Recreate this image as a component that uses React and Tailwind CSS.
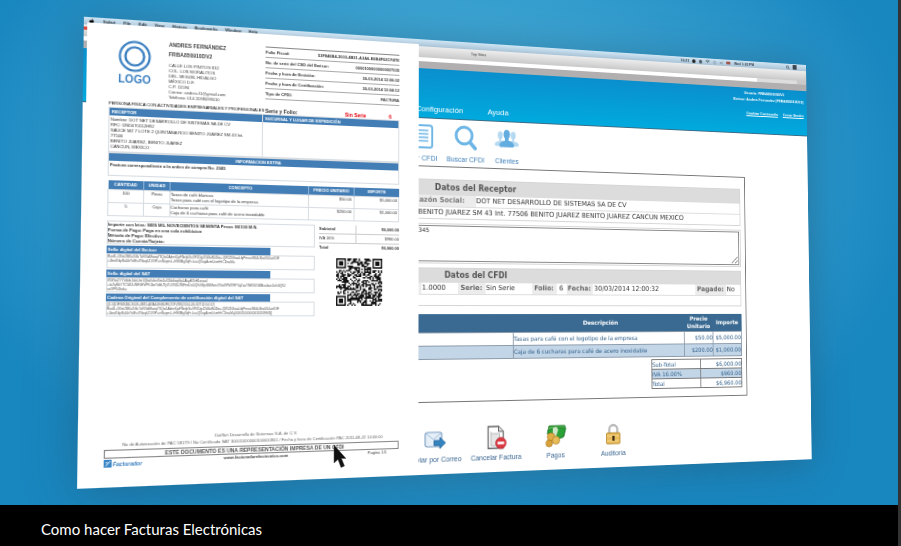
import { FaApple, FaWifi, FaVolumeUp, FaSearch } from "react-icons/fa";

const menus = ["Safari", "File", "Edit", "View", "History", "Bookmarks", "Window", "Help"];

const address = [
  "CALLE LOS PINITOS 832",
  "COL. LOS MORALITOS",
  "DEL. MIGUEL HIDALGO",
  "MÉXICO D.F.",
  "C.P. 11590",
  "Correo: andres.f1@gmail.com",
  "Teléfono: 014 2098098010",
];

const folioRows = [
  ["Folio Fiscal:", "53F846B4-3003-4B31-A3A6-E6B4F02CF47E"],
  ["No. de serie del CSD del Emisor:", "00001000000000037535"],
  ["Fecha y hora de Emisión:", "30-03-2014 12:06:02"],
  ["Fecha y hora de Certificación:", "30-03-2014 12:04:12"],
  ["Tipo de CFDI:", "FACTURA"],
];

const receptor = [
  "Nombre: DOT NET DESARROLLO DE SISTEMAS SA DE CV",
  "RFC: DND070112H92",
  "SAUCE MZ 7 LOTE 2 QUINTANA ROO BENITO JUAREZ SM 43 Int.",
  "77506",
  "BENITO JUAREZ, BENITO JUAREZ",
  "CANCUN, MEXICO",
];

const conceptos = [
  { cantidad: "100", unidad: "Pieza", lines: ["Tasas de café blancas", "Tasas para café con el logotipo de la empresa"], precio: "$50.00", importe: "$5,000.00" },
  { cantidad: "5", unidad: "Caja", lines: ["Cucharas para café", "Caja de 6 cucharas para café de acero inoxidable"], precio: "$200.00", importe: "$1,000.00" },
];

const sellos = [
  {
    title: "Sello digital del Emisor",
    lines: [
      "RocB+3Xm2BKa7i8uTzKNdMozqY3Qw1AdmXjaFNefpSuVF2Dg45WatN4Dw+QW2Z0haaLfqPmcwSB4c3bz0S4ueK3F",
      "+0brd7dpNu5bYvIEu7NoqkZ1VIP+inNopmL+H98Mg8qFcLuaQXoyAzmUsmHrCDnaM=",
    ],
  },
  {
    title: "Sello digital del SAT",
    lines: [
      "W0Nw2YYVdde1duUm1Qbz6vbeXm4aXDkdiwp9pLAkyA7kH1ooaxl",
      "+toZqNkYTCWDLlNF0EVPKJbxYdbUTyTUOSD2MFtmDa5QKrMjw6BMwnOVwKPM7RFYqZoaYNR3U5BMoabae2ohGQ92",
      "oaYPK4bok=",
    ],
  },
  {
    title: "Cadena Original del Complemento de certificación digital del SAT",
    lines: [
      "||1.0|53F846B4-3003-4B31-A3A6-E6B4F02CF47E|2014-03-30T12:04:12|",
      "RocB+3Xm2BKa7i8uTzKNdMozqY3Qw1AdmXjaFNefpSuVF2Dg45WatN4Dw+QW2Z0haaLfqPmcwSB4c3bz0S4ueK3F",
      "+0brd7dpNu5bYvIEu7NoqkZ1VIP+inNopmL+H98Mg8qFcLuaQXoyAzmUsmHrCDnaM=|00001000000030209963||",
    ],
  },
];

const QR_SIZE = 33;

function finderModule(x, y) {
  const fx = x < 8 ? x : x > QR_SIZE - 9 ? QR_SIZE - 1 - x : -1;
  const fy = y < 8 ? y : y > QR_SIZE - 9 ? QR_SIZE - 1 - y : -1;
  if (fx < 0 || fy < 0 || (x > 8 && y > 8)) return null;
  if (fx === 7 || fy === 7) return false;
  const d = Math.max(Math.abs(fx - 3), Math.abs(fy - 3));
  return d !== 2;
}

function qrPath() {
  let seed = 77;
  let d = "";
  for (let y = 0; y < QR_SIZE; y++) {
    for (let x = 0; x < QR_SIZE; x++) {
      seed = (seed * 1103515245 + 12345) % 2147483648;
      const on = finderModule(x, y) ?? seed / 2147483648 > 0.45;
      if (on) d += `M${x} ${y}h1v1h-1z`;
    }
  }
  return d;
}

function QrCode() {
  return (
    <svg viewBox={`0 0 ${QR_SIZE} ${QR_SIZE}`} className="size-[46px]" aria-hidden="true">
      <path d={qrPath()} fill="#111" />
    </svg>
  );
}

function MenuBar() {
  return (
    <div className="flex h-[7px] items-center justify-between bg-linear-to-b from-[#cfe6f5] to-[#a9c3d6] px-1 text-[4px] leading-[5px] font-bold text-[#333d45]">
      <div className="flex items-center gap-[7px]">
        <FaApple className="size-[6px] text-black" />
        {menus.map((m) => (
          <span key={m}>{m}</span>
        ))}
      </div>
      <div className="flex items-center gap-1">
        <span>16:21</span>
        <span className="size-1 rounded-full bg-[#222]" />
        <span className="size-1 rounded-xs bg-[#4b5a66]" />
        <FaWifi className="size-[5px]" />
        <span className="size-1 rounded-full border border-[#8fa5b5]" />
        <FaVolumeUp className="size-1 text-[#8496a3]" />
        <span className="h-[3px] w-[5px] bg-[#a3564a]" />
        <span className="mr-9">Wed 1:22 PM</span>
        <FaSearch className="size-1" />
        <span className="mr-2 h-[5px] w-[5px] bg-[#3b464f]" />
      </div>
    </div>
  );
}

function BrowserBar() {
  return (
    <>
      <div className="flex h-[11px] items-start justify-between bg-linear-to-b from-[#ededed] to-[#c9c9c9] pt-[2px] text-[4px] leading-[5px] text-[#444]">
        <span className="size-[3px] bg-[#e0483e]" />
        <span>Top Sites</span>
        <span />
      </div>
      <div className="flex h-1 items-stretch bg-[#c9c9c9]">
        <div className="grow bg-white" />
        <div className="mr-3 w-[50px] bg-[#ddd]" />
      </div>
      <div className="h-[7px] bg-[#b1afaf]" />
    </>
  );
}

function SiteHeader() {
  return (
    <header className="flex h-[50px] items-stretch justify-between border-b border-[#3c6c85] bg-linear-to-b from-[#0a8fcd] to-[#00aade] text-white">
      <nav className="flex items-end gap-[26px] pb-[2px] pl-[318px] text-[8px] leading-[12px]">
        <a href="#configuracion">Configuración</a>
        <a href="#ayuda">Ayuda</a>
      </nav>
      <div className="flex flex-col pt-[2px] pr-1 text-right text-[4px] leading-[7px] font-bold">
        <span className="pr-6">Usuario: FRBA850910DV2</span>
        <span>Emisor: Andres Fernandez (FRBA850910DV2)</span>
        <span className="mt-2 flex justify-end gap-[6px]">
          <a href="#contrasena" className="underline">Cambiar Contraseña</a>
          <a href="#cerrar" className="underline">Cerrar Sesión</a>
        </span>
      </div>
    </header>
  );
}

function DocIcon() {
  return (
    <svg viewBox="0 0 24 26" className="h-[26px] w-6" fill="none" stroke="#6db6e6" aria-hidden="true">
      <rect x="3" y="2" width="18" height="22" rx="2.500" strokeWidth="2" />
      <path d="M7 7h10M7 10.500h10M7 14h10M7 17.500h10" strokeWidth="1.600" />
    </svg>
  );
}

function SearchIcon() {
  return (
    <svg viewBox="0 0 24 26" className="h-[26px] w-6" fill="none" stroke="#6db6e6" aria-hidden="true">
      <circle cx="10.500" cy="10.500" r="8.500" strokeWidth="3" />
      <path d="M17 17.500l5 5.500" strokeWidth="4" strokeLinecap="round" />
    </svg>
  );
}

function PeopleIcon() {
  return (
    <svg viewBox="0 0 26 26" className="size-[26px]" aria-hidden="true">
      <g fill="#b5d9f1">
        <ellipse cx="6" cy="8.500" rx="2.700" ry="4" />
        <ellipse cx="20" cy="8.500" rx="2.700" ry="4" />
        <path d="M5 12h2v2h12v-2h2v2.500q5 .5 5 3.500l-1 1.500H1L0 18q0-3 5-3.500z" />
      </g>
      <g fill="#62acdf">
        <ellipse cx="13" cy="7.500" rx="3.500" ry="4.800" />
        <path d="M11 11h4v3q6 1 6 5l-1 1.500H6L5 19q0-4 6-5z" />
      </g>
    </svg>
  );
}

function MailIcon() {
  return (
    <svg viewBox="0 0 24 24" className="size-6" aria-hidden="true">
      <rect x="2" y="5" width="17" height="14" rx="2" fill="#e6eff8" stroke="#7d9fc4" strokeWidth="1.200" />
      <path d="M3 6l7.500 6L18 6" fill="none" stroke="#a3bddb" />
      <path d="M11 13h6v-3l6 5.500-6 5.500v-3h-6z" fill="#3484c0" stroke="#1f5f99" strokeWidth=".7" />
    </svg>
  );
}

function CancelIcon() {
  return (
    <svg viewBox="0 0 24 24" className="size-6" aria-hidden="true">
      <path d="M3.500 1h11l5 5v16.500h-16z" fill="#fff" stroke="#666" strokeWidth="1.300" />
      <path d="M14.500 1v5h5" fill="#ddd" stroke="#666" />
      <path d="M6.500 6v14h9V8h-9" fill="#e5e5e5" stroke="#bbb" />
      <circle cx="17" cy="17.500" r="5.500" fill="#dc3a42" stroke="#b01f2a" strokeWidth=".7" />
      <rect x="13.500" y="16.200" width="7" height="2.600" fill="#fff" />
    </svg>
  );
}

function MoneyIcon() {
  return (
    <svg viewBox="0 0 24 24" className="size-6" aria-hidden="true">
      <path d="M5 2h17l1 3-2 8-6 2-12-5z" fill="#4fae4b" stroke="#1d7b28" />
      <path d="M3 7l9-3 11 1-3 9-8 1z" fill="#2aa237" stroke="#17752a" strokeWidth=".7" />
      <path d="M9 4l4-1 2 3-3 8-3-2z" fill="#cfe6c8" />
      <circle cx="7" cy="13" r="4" fill="#e0ae46" stroke="#a8761c" strokeWidth=".7" />
      <circle cx="12.500" cy="16.500" r="4" fill="#e8bd59" stroke="#a8761c" strokeWidth=".7" />
      <circle cx="5" cy="19.500" r="3.500" fill="#d8a23a" stroke="#a8761c" strokeWidth=".7" />
    </svg>
  );
}

function LockIcon() {
  return (
    <svg viewBox="0 0 24 24" className="size-6" aria-hidden="true">
      <path d="M7.500 12V7.500a4.500 4.500 0 0 1 9 0V12" fill="none" stroke="#b9b9b9" strokeWidth="2.400" />
      <rect x="4.500" y="11" width="15" height="11" rx="1" fill="#e9bd5c" stroke="#b98a2b" />
      <path d="M5 14h14M5 19h14" stroke="#f5d78e" />
      <path d="M11 14h2.500v5H11z" fill="#3b2b12" />
    </svg>
  );
}

const toolbar = [
  { label: "Ver CFDI", icon: DocIcon },
  { label: "Buscar CFDI", icon: SearchIcon },
  { label: "Clientes", icon: PeopleIcon },
];

const actions = [
  { label: "Enviar por Correo", icon: MailIcon },
  { label: "Cancelar Factura", icon: CancelIcon },
  { label: "Pagos", icon: MoneyIcon },
  { label: "Auditoría", icon: LockIcon },
];

function InvoiceDetail() {
  const label = "bg-[#ececec] p-0 text-center font-bold text-[#666]";
  return (
    <section className="mr-[78px] ml-[75px] border border-[#777] px-[5px] pt-3 pb-2 font-['DejaVu_Sans',sans-serif] text-[7px] leading-[11px] text-[#333]">
      <table className="w-full table-fixed border-collapse border border-[#d5d5d5]">
        <thead>
          <tr>
            <th colSpan={2} className="bg-[#dcdcdc] p-0 text-[8px] leading-[15px] text-[#555]">Datos del Receptor</th>
          </tr>
        </thead>
        <tbody>
          <tr className="border-b border-[#ddd]">
            <td className="bg-[#ececec] p-0 pr-3 text-right font-bold text-[#777]">Razón Social:</td>
            <td className="p-0">DOT NET DESARROLLO DE SISTEMAS SA DE CV</td>
          </tr>
          <tr>
            <td colSpan={2} className="p-0 pr-[67px] text-right">
              BENITO JUAREZ SM 43 Int. 77506 BENITO JUAREZ BENITO JUAREZ CANCUN MEXICO
            </td>
          </tr>
        </tbody>
      </table>

      <div className="mt-1 border border-[#d5d5d5] p-px">
        <textarea
          aria-label="Comentarios"
          defaultValue="No. 2345"
          className="block h-[36px] w-full resize rounded-none border border-[#888] p-0 pl-[221px] text-[6px] leading-[8px]"
        />
      </div>

      <table className="mt-1 w-full table-fixed border-collapse border border-[#d5d5d5]">
        <colgroup>
          <col className="w-[242px]" />
          <col className="w-[38px]" />
          <col className="w-[29px]" />
          <col className="w-[50px]" />
          <col className="w-[27px]" />
          <col className="w-[11px]" />
          <col className="w-[29px]" />
          <col className="w-[118px]" />
          <col className="w-[37px]" />
          <col />
        </colgroup>
        <thead>
          <tr>
            <th colSpan={10} className="bg-[#dcdcdc] p-0 text-[8px] leading-[14px] text-[#555]">Datos del CFDI</th>
          </tr>
        </thead>
        <tbody className="text-[7px]">
          <tr className="border-b border-[#ddd] whitespace-nowrap">
            <td className="bg-[#ececec] p-0" />
            <td className="p-0 pl-px">1.0000</td>
            <td className={label}>Serie:</td>
            <td className="p-0 pl-px">Sin Serie</td>
            <td className={label}>Folio:</td>
            <td className="p-0 text-center">6</td>
            <td className={label}>Fecha:</td>
            <td className="p-0 pl-[2px]">30/03/2014 12:00:32</td>
            <td className={label}>Pagado:</td>
            <td className="p-0 pl-px">No</td>
          </tr>
          <tr>
            <td colSpan={10} className="h-[11px] p-0" />
          </tr>
        </tbody>
      </table>

      <table className="mt-2 w-full table-fixed border-collapse text-[6px] leading-3 text-[#2f5f8a]">
        <colgroup>
          <col className="w-[339px]" />
          <col />
          <col className="w-[34px]" />
          <col className="w-[34px]" />
        </colgroup>
        <thead>
          <tr className="bg-[#3a6a92] text-white">
            <th className="h-[18px] p-0" />
            <th className="p-0">Descripción</th>
            <th className="p-0 leading-[8px]">Precio Unitario</th>
            <th className="p-0">Importe</th>
          </tr>
        </thead>
        <tbody>
          <tr>
            <td className="border border-[#8d9cab] p-0" />
            <td className="border border-[#8d9cab] p-0">Tasas para café con el logotipo de la empresa</td>
            <td className="border border-[#8d9cab] p-0 text-right">$50.00</td>
            <td className="border border-[#8d9cab] p-0 text-right">$5,000.00</td>
          </tr>
          <tr className="bg-[#c3d6e8]">
            <td className="border border-[#8d9cab] p-0" />
            <td className="border border-[#8d9cab] p-0">Caja de 6 cucharas para café de acero inoxidable</td>
            <td className="border border-[#8d9cab] p-0 text-right">$200.00</td>
            <td className="border border-[#8d9cab] p-0 text-right">$1,000.00</td>
          </tr>
        </tbody>
      </table>

      <table className="mt-[2px] ml-auto w-[107px] border-collapse text-[6px] leading-[9px] text-[#2f5f8a]">
        <tbody>
          <tr>
            <td className="w-[57px] border border-[#777] p-0">Sub-Total</td>
            <td className="border border-[#777] p-0 text-right">$6,000.00</td>
          </tr>
          <tr className="bg-[#c3d6e8]">
            <td className="border border-[#777] p-0">IVA 16.00%</td>
            <td className="border border-[#777] p-0 text-right">$960.00</td>
          </tr>
          <tr>
            <td className="border border-[#777] p-0">Total</td>
            <td className="border border-[#777] p-0 text-right">$6,960.00</td>
          </tr>
        </tbody>
      </table>
    </section>
  );
}

function BrowserWindow() {
  return (
    <div className="flex h-[430px] flex-col bg-white">
      <MenuBar />
      <BrowserBar />
      <SiteHeader />
      <div className="flex gap-1 pt-[5px] pb-[2px] pl-[306px] text-[7px] leading-[10px] text-[#3d7fb8]">
        {toolbar.map(({ label, icon: Icon }) => (
          <a key={label} href="#menu" className="flex w-10 flex-col items-center gap-1 whitespace-nowrap">
            <Icon />
            {label}
          </a>
        ))}
      </div>
      <InvoiceDetail />
      <div className="mt-6 flex pl-[306px] text-[7px] leading-[10px] text-[#3a6590]">
        {actions.map(({ label, icon: Icon }) => (
          <a key={label} href="#accion" className="flex w-16 flex-col items-center gap-[3px] whitespace-nowrap">
            <Icon />
            {label}
          </a>
        ))}
      </div>
    </div>
  );
}

function PaperHeader() {
  return (
    <div className="flex pt-3">
      <div className="flex w-[46px] flex-col items-center pt-[2px]">
        <svg viewBox="0 0 30 30" className="size-[30px]" fill="none" stroke="#3b7fc0" aria-hidden="true">
          <circle cx="15" cy="15" r="13.500" strokeWidth="2" />
          <circle cx="15" cy="15" r="8.500" strokeWidth="2.200" />
        </svg>
        <span className="pt-px text-[10px] leading-3 font-bold text-[#3b7fc0]">LOGO</span>
      </div>
      <div className="w-[99px] pl-2 text-[#444]">
        <p className="text-[5px] leading-[9px] font-bold">ANDRES FERNÁNDEZ</p>
        <p className="text-[5px] leading-[9px] font-bold">FRBA850910DV2</p>
        <div className="pt-[3px] text-[4px] leading-[5px]">
          {address.map((line) => (
            <p key={line}>{line}</p>
          ))}
        </div>
      </div>
      <dl className="grow border-t border-[#888] text-[4px] leading-[9px] font-bold">
        {folioRows.map(([k, v]) => (
          <div key={k} className="flex justify-between border-b border-[#aaa]">
            <dt>{k}</dt>
            <dd>{v}</dd>
          </div>
        ))}
      </dl>
    </div>
  );
}

function Paper() {
  const band = "bg-[#427db5] leading-[7px] font-bold text-white";
  return (
    <article className="flex h-[424px] flex-col bg-white px-5 text-[4px] leading-[5px] text-[#333]">
      <PaperHeader />
      <div className="flex pt-[3px] leading-[6px] font-bold">
        <span className="w-[145px] font-normal whitespace-nowrap text-black">PERSONA FÍSICA CON ACTIVIDADES EMPRESARIALES Y PROFESIONALES</span>
        <span className="w-[78px] text-[5px]">Serie y Folio:</span>
        <span className="grow text-[5px] text-red-600">Sin Serie</span>
        <span className="pr-2 text-[5px] text-red-600">6</span>
      </div>

      <div className="flex border border-[#d8dde2]">
        <div className="w-[142px] border-r border-[#d8dde2] pb-[2px]">
          <h2 className={`${band} pl-[2px]`}>RECEPTOR</h2>
          <div className="pt-px pl-px whitespace-nowrap">
            {receptor.map((line) => (
              <p key={line}>{line}</p>
            ))}
          </div>
        </div>
        <div className="grow">
          <h2 className={`${band} pl-[2px]`}>SUCURSAL Y LUGAR DE EXPEDICIÓN</h2>
        </div>
      </div>

      <div className="border border-[#d8dde2] pb-[6px]">
        <h2 className={`${band} text-center`}>INFORMACION EXTRA</h2>
        <p className="pl-px leading-[7px] font-bold">Factura correspondiente a la orden de compra No. 2345</p>
      </div>

      <table className="mt-1 w-full table-fixed border-collapse">
        <colgroup>
          <col className="w-8" />
          <col className="w-6" />
          <col />
          <col className="w-[45px]" />
          <col className="w-[45px]" />
        </colgroup>
        <thead>
          <tr className="bg-[#427db5] leading-[8px] text-white">
            <th className="border-r border-[#8fb3d6] p-0">CANTIDAD</th>
            <th className="border-r border-[#8fb3d6] p-0">UNIDAD</th>
            <th className="border-r border-[#8fb3d6] p-0">CONCEPTO</th>
            <th className="border-r border-[#8fb3d6] p-0">PRECIO UNITARIO</th>
            <th className="p-0">IMPORTE</th>
          </tr>
        </thead>
        <tbody>
          {conceptos.map((c) => (
            <tr key={c.cantidad} className="border border-[#d8dde2] align-top">
              <td className="border-r border-[#d8dde2] p-0 text-center">{c.cantidad}</td>
              <td className="border-r border-[#d8dde2] p-0 text-center">{c.unidad}</td>
              <td className="border-r border-[#d8dde2] p-0 pb-px">
                {c.lines.map((l) => (
                  <p key={l}>{l}</p>
                ))}
              </td>
              <td className="border-r border-[#d8dde2] p-0 pr-[2px] text-right">{c.precio}</td>
              <td className="p-0 pr-px text-right">{c.importe}</td>
            </tr>
          ))}
        </tbody>
      </table>

      <div className="mt-1 flex justify-between">
        <div className="w-[194px]">
          <div className="border border-[#d8dde2] font-bold">
            <p>Importe con letra: SEIS MIL NOVECIENTOS SESENTA Pesos 00/100 M.N.</p>
            <p>Forma de Pago: Pago en una sola exhibicion</p>
            <p>Método de Pago: Efectivo</p>
            <p>Número de Cuenta/Tarjeta:</p>
          </div>
          {sellos.map((s) => (
            <div key={s.title} className="mt-px">
              <h3 className={`${band} w-[151px] pl-px whitespace-nowrap`}>{s.title}</h3>
              <div className="min-h-[14px] border border-[#d8dde2] text-[3px] leading-[4px] break-all text-[#555]">
                {s.lines.map((l) => (
                  <p key={l}>{l}</p>
                ))}
              </div>
            </div>
          ))}
        </div>
        <div className="flex w-20 flex-col items-center">
          <table className="w-full border-collapse">
            <tbody className="leading-[8px]">
              <tr className="border-b border-[#ccc] font-bold">
                <td className="w-9 border-r border-[#ccc] p-0">Subtotal</td>
                <td className="p-0 text-right">$6,000.00</td>
              </tr>
              <tr className="border-b border-[#ccc]">
                <td className="border-r border-[#ccc] p-0">IVA 16%</td>
                <td className="p-0 text-right">$960.00</td>
              </tr>
              <tr className="font-bold">
                <td className="p-0">Total</td>
                <td className="p-0 text-right">$6,960.00</td>
              </tr>
            </tbody>
          </table>
          <div className="pt-[6px]">
            <QrCode />
          </div>
        </div>
      </div>

      <footer className="mt-auto pb-[17px] text-center leading-[6px] text-[#666]">
        <p>DotNet Desarrollo de Sistemas S.A. de C.V.</p>
        <p className="whitespace-nowrap">
          No de Autorización de PAC 58179 / No Certificado SAT 30001000000100000801 / Fecha y hora de Certificación PAC 2011-08-22 14:00:00
        </p>
        <p className="mt-px border border-[#888] text-[5px] font-bold text-[#555]">ESTE DOCUMENTO ES UNA REPRESENTACIÓN IMPRESA DE UN CFDI</p>
        <div className="grid grid-cols-3 text-[#444]">
          <span className="flex items-center gap-px pt-px text-[5px] font-bold text-[#3b7fc0] italic">
            <svg viewBox="0 0 8 8" className="size-[7px]" aria-hidden="true">
              <rect width="8" height="8" fill="#3b86c6" />
              <path d="M2 6.500L6.500 1.500M2 3h2" stroke="#fff" />
            </svg>
            Facturador
          </span>
          <span className="font-bold">www.facturadorelectronico.com</span>
          <span className="pr-3 text-right">Pagina 1/1</span>
        </div>
      </footer>
    </article>
  );
}

function Cursor() {
  return (
    <svg viewBox="0 0 14 24" className="absolute top-[88%] left-[37%] h-6 w-[14px]" aria-hidden="true">
      <path d="M2 0v18l4-3.500 3 8 3.500-1.500-3-7.500H14z" fill="#111" stroke="#555" strokeWidth=".5" />
    </svg>
  );
}

export default function App() {
  return (
    <div className="min-h-screen bg-[#333] pr-[3px] font-['Liberation_Sans',Arial,sans-serif]">
      <main className="min-h-screen bg-black">
        <div className="relative aspect-video overflow-hidden bg-[radial-gradient(ellipse_at_48%_35%,#48b2de_0%,#3aa2d1_35%,#1886bf_75%)] pt-[41px] pr-[38px] pl-[95px] perspective-[1310px] perspective-origin-[50%_48%]">
          <div className="relative shadow-[0_4px_40px_rgba(40,75,100,0.45)] transform-[rotateX(3deg)_rotateY(18deg)]">
            <BrowserWindow />
            <div className="absolute top-[5px] left-[3px] w-[318px]">
              <Paper />
            </div>
          </div>
          <Cursor />
        </div>
        <h1 className="px-[41px] pt-[14px] font-['Lato',sans-serif] text-[15px] leading-5 text-white">
          Como hacer Facturas Electrónicas
        </h1>
      </main>
    </div>
  );
}
